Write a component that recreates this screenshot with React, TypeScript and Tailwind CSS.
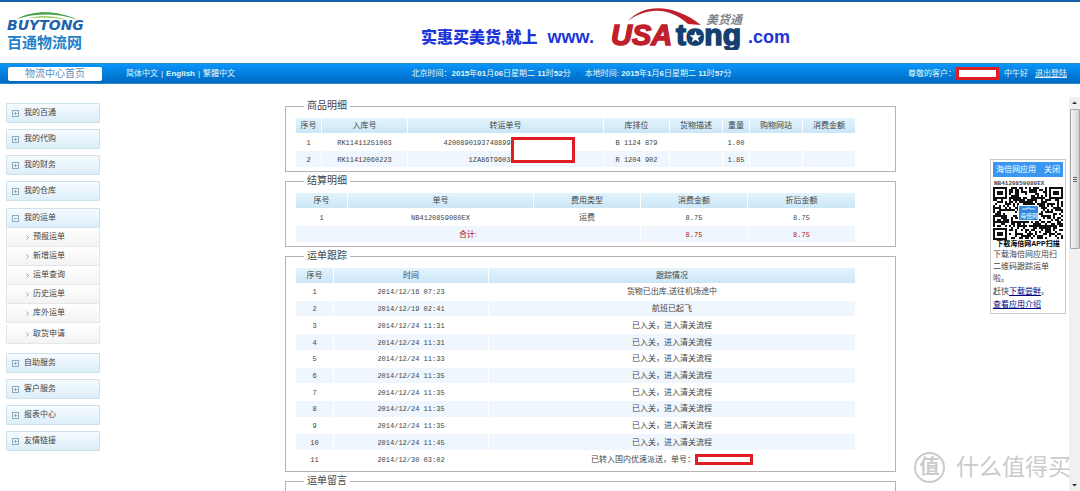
import type { ReactNode } from 'react'
import clsx from 'clsx'

const SUB_ITEMS = ['预报运单', '新增运单', '运单查询', '历史运单', '库外运单']

const MENU_TOP = ['我的百通', '我的代购', '我的财务', '我的仓库']
const MENU_BOTTOM = ['自助服务', '客户服务', '报表中心', '友情链接']

const CLEARED = '已入关，进入清关流程'

const TRACKING = [
  { time: '2014/12/16 07:23', status: '货物已出库,送往机场途中' },
  { time: '2014/12/19 02:41', status: '航班已起飞' },
  { time: '2014/12/24 11:31', status: CLEARED },
  { time: '2014/12/24 11:31', status: CLEARED },
  { time: '2014/12/24 11:33', status: CLEARED },
  { time: '2014/12/24 11:35', status: CLEARED },
  { time: '2014/12/24 11:35', status: CLEARED },
  { time: '2014/12/24 11:35', status: CLEARED },
  { time: '2014/12/24 11:35', status: CLEARED },
  { time: '2014/12/24 11:45', status: CLEARED },
  { time: '2014/12/30 03:02', status: '已转入国内优速派送，单号：', masked: true },
]

function BuytongLogo() {
  return (
    <a href="#" className="block w-[84px]">
      <svg viewBox="0 0 84 22" className="block h-[22px] w-[84px]" aria-hidden="true">
        <path d="M10 8 C26 -1 50 -1 71 9 C50 2 30 2 10 8Z" fill="#43a047" />
        <path d="M22 7 C34 4 50 5 60 9 C48 6 34 6 22 7Z" fill="#8bc34a" />
        <text x="0" y="19" fontFamily="DejaVu Sans" fontWeight="bold" fontStyle="italic" fontSize="14" fill="#1c62ac">
          BUYTONG
        </text>
      </svg>
      <span className="block pt-px text-[15px] leading-[18px] font-bold text-[#2380c8]">百通物流网</span>
    </a>
  )
}

function UsaTongLogo() {
  return (
    <svg viewBox="0 0 146 46" className="h-[46px] w-[146px]" role="img" aria-label="USAtong 美货通">
      <path d="M26 17 C42 -1 72 0 99 21 L86 20 C66 2 44 4 26 17Z" fill="#c0202c" />
      <text x="9" y="41" fontFamily="Liberation Sans" fontWeight="bold" fontStyle="italic" fontSize="29" fill="#c0202c" stroke="#c0202c" strokeWidth="1.500">
        USA
      </text>
      <text x="74" y="41" fontFamily="Liberation Sans" fontWeight="bold" fontSize="30" fill="#153f70" stroke="#153f70" strokeWidth="1.500">
        tong
      </text>
      <circle cx="93.500" cy="33" r="6" fill="#153f70" />
      <path d="M93.500 27 L95 31.300 L99.500 31.300 L96 34 L97.300 38.300 L93.500 35.700 L89.700 38.300 L91 34 L87.500 31.300 L92 31.300Z" fill="#fff" />
      <text x="104" y="20" fontFamily="Noto Sans CJK SC" fontStyle="italic" fontSize="12" fill="#808488">
        美货通
      </text>
    </svg>
  )
}

function Mask({ className }: { className: string }) {
  return <span className={clsx('border-[3px] border-[#e01c24] bg-white', className)} />
}

function MenuButton({ label, open }: { label: string; open?: boolean }) {
  return (
    <button
      type="button"
      aria-expanded={!!open}
      className="flex h-5 w-full items-center gap-[5px] rounded-[1px] border border-[#cfe2ec] bg-linear-to-b from-[#f6fbfe] to-[#dceefa] pl-[5px]"
    >
      <svg viewBox="0 0 7 7" className="size-[7px]" fill="none" stroke="#8fa9b8">
        <rect x=".5" y=".5" width="6" height="6" />
        <path d={open ? 'M2 3.500H5' : 'M2 3.500H5M3.500 2V5'} />
      </svg>
      {label}
    </button>
  )
}

function SubLink({ label }: { label: string }) {
  return (
    <a
      href="#"
      className="flex h-[19px] items-center gap-1 border-x border-b border-[#e4e6e8] bg-linear-to-b from-white to-[#f3f3f3] pl-[19px]"
    >
      <svg viewBox="0 0 3 5" className="h-[5px] w-[3px]" fill="none" stroke="#8fa0a8">
        <path d="M.5 .5L2.500 2.500L.5 4.500" />
      </svg>
      {label}
    </a>
  )
}

function Sidebar() {
  return (
    <nav className="flex w-[94px] shrink-0 flex-col gap-[6px] pt-[6px]">
      {MENU_TOP.map((label) => (
        <MenuButton key={label} label={label} />
      ))}
      <div className="mt-px mb-[3px]">
        <MenuButton label="我的运单" open />
        {SUB_ITEMS.map((label) => (
          <SubLink key={label} label={label} />
        ))}
        <div className="pt-[2px]">
          <SubLink label="取货申请" />
        </div>
      </div>
      {MENU_BOTTOM.map((label) => (
        <MenuButton key={label} label={label} />
      ))}
    </nav>
  )
}

function Section({ title, children }: { title: string; children?: ReactNode }) {
  return (
    <fieldset className="mb-[2px] border border-[#b4b4b4] pb-[3px]">
      <legend className="ml-[18px] px-[3px] text-[10px] leading-[14px]">{title}</legend>
      <div className="pt-[5px] pr-[39px] pl-[10px]">{children}</div>
    </fieldset>
  )
}

function Table({ cols, heads, className, children }: { cols: string[]; heads: string[]; className?: string; children: ReactNode }) {
  return (
    <table className={clsx('w-full table-fixed border-separate border-spacing-0 text-center', className)}>
      <colgroup>
        {cols.map((width, i) => (
          <col key={i} className={width} />
        ))}
      </colgroup>
      <thead>
        <tr className="h-[16px]">
          {heads.map((head) => (
            <th
              key={head}
              className="border-r border-b border-white bg-linear-to-b from-[#e3f4fc] to-[#cbe6f7] bg-clip-padding p-0 leading-[15px] font-normal"
            >
              {head}
            </th>
          ))}
        </tr>
      </thead>
      <tbody>{children}</tbody>
    </table>
  )
}

function Row({ cells, even, className }: { cells: ReactNode[]; even?: boolean; className?: string }) {
  return (
    <tr className={clsx('h-[16px]', className)}>
      {cells.map((cell, i) => (
        <Cell key={i} even={even}>
          {cell}
        </Cell>
      ))}
    </tr>
  )
}

function Cell({ even, colSpan, children }: { even?: boolean; colSpan?: number; children?: ReactNode }) {
  return (
    <td
      colSpan={colSpan}
      className={clsx('border-r border-b border-white bg-clip-padding p-0 leading-[15px]', even && 'bg-[#eff6fd]')}
    >
      {children}
    </td>
  )
}

function Mono({ children }: { children: ReactNode }) {
  return <span className="font-['Liberation_Mono',monospace] text-[7px] leading-[10px]">{children}</span>
}

function Details() {
  return (
    <main className="min-w-0 flex-1 pt-[2px]">
      <Section title="商品明细">
        <Table
          className="h-[50px]"
          cols={['w-[26px]', 'w-[86px]', 'w-[196px]', 'w-[66px]', 'w-[53px]', 'w-[27px]', 'w-[53px]', 'w-[53px]']}
          heads={['序号', '入库号', '转运单号', '库排位', '货物描述', '重量', '购物网站', '消费金额']}
        >
          <Row
            cells={[
              <Mono>1</Mono>,
              <Mono>RK11411251003</Mono>,
              <span className="relative inline-block w-[124px] text-left align-top">
                <Mono>42008901937488994</Mono>
                <Mask className="absolute top-[2px] left-[67px] h-[26px] w-[64px]" />
              </span>,
              <Mono>B 1124 879</Mono>,
              '',
              <Mono>1.00</Mono>,
              '',
              '',
            ]}
          />
          <Row
            even
            cells={[
              <Mono>2</Mono>,
              <Mono>RK11412060223</Mono>,
              <span className="inline-block w-[74px] text-left align-top">
                <Mono>1ZA86T96030</Mono>
              </span>,
              <Mono>R 1204 902</Mono>,
              '',
              <Mono>1.85</Mono>,
              '',
              '',
            ]}
          />
        </Table>
      </Section>

      <Section title="结算明细">
        <Table
          className="h-[50px]"
          cols={['w-[52px]', 'w-[186px]', 'w-[107px]', 'w-[107px]', 'w-[108px]']}
          heads={['序号', '单号', '费用类型', '消费金额', '折后金额']}
        >
          <Row cells={[<Mono>1</Mono>, <Mono>NB4120859080EX</Mono>, '运费', <Mono>8.75</Mono>, <Mono>8.75</Mono>]} />
          <tr className="h-[16px] text-[#b0101c]">
            <Cell even colSpan={3}>合计:</Cell>
            <Cell even><Mono>8.75</Mono></Cell>
            <Cell even><Mono>8.75</Mono></Cell>
          </tr>
        </Table>
      </Section>

      <Section title="运单跟踪">
        <Table className="h-[200px]" cols={['w-[38px]', 'w-[155px]', 'w-[367px]']} heads={['序号', '时间', '跟踪情况']}>
          {TRACKING.map((entry, i) => (
            <Row
              key={i}
              even={i % 2 === 1}
              cells={[
                <Mono>{i + 1}</Mono>,
                <Mono>{entry.time}</Mono>,
                <span className="inline-flex items-center align-top">
                  {entry.status}
                  {entry.masked && <Mask className="h-[11px] w-[58px]" />}
                </span>,
              ]}
            />
          ))}
        </Table>
      </Section>

      <Section title="运单留言">
        <div className="h-10" />
      </Section>
    </main>
  )
}

const QR_COLS = 35
const QR_ROWS = 26

function isDark(x: number, y: number) {
  const n = Math.sin(x * 12.9898 + y * 78.233) * 43758.5453
  return n - Math.floor(n) > 0.47
}

function QrCode() {
  const finders = [[0, 0], [56, 0], [0, 41]]
  const cells: string[] = []
  for (let y = 0; y < QR_ROWS; y++) {
    for (let x = 0; x < QR_COLS; x++) {
      const nearFinder = (y < 6 && (x < 8 || x > 26)) || (y > 19 && x < 8)
      if (!nearFinder && isDark(x, y)) cells.push(`M${x * 2} ${y * 2}h2v2h-2z`)
    }
  }
  return (
    <svg viewBox="0 0 70 53" className="h-[53px] w-[70px]" role="img" aria-label="二维码">
      <path d={cells.join('')} fill="#111" />
      {finders.map(([x, y]) => (
        <g key={`${x}-${y}`}>
          <rect x={x + 1} y={y + 1} width="12" height="10" fill="#fff" stroke="#111" strokeWidth="2" />
          <rect x={x + 4} y={y + 4} width="6" height="4" fill="#111" />
        </g>
      ))}
      <rect x="25" y="18" width="21" height="16" rx="1" fill="#fff" />
      <rect x="26" y="19" width="19" height="14" rx="1" fill="#2f86dc" />
      <path d="M29 22h5v-1h3v1h5" stroke="#d9ecff" fill="none" />
      <text x="27" y="31" fontSize="6" fontFamily="Noto Sans CJK SC" fill="#fff">海倍网</text>
    </svg>
  )
}

function AppPanel() {
  return (
    <aside className="mt-[62px] w-[76px] shrink-0 self-start border border-[#c8c8c8] bg-white p-[2px]">
      <div className="flex h-[15px] items-center justify-between bg-[#3b96f2] px-[3px] text-white">
        <span>海倍网应用</span>
        <button type="button">关闭</button>
      </div>
      <div className="mt-[4px] pl-px font-['Liberation_Mono',monospace] text-[6px] leading-[6px] font-bold">NB4120859080EX</div>
      <QrCode />
      <div className="text-center text-[7px] leading-[7px] font-bold whitespace-nowrap text-black">下载海倍网APP扫描</div>
      <p className="mt-[2px] leading-[12px]">下载海倍网应用扫二维码跟踪运单啦。</p>
      <p className="leading-[13px]">
        赶快<a href="#" className="text-[#000080] underline">下载尝鲜</a>。
      </p>
      <p className="leading-[13px]">
        <a href="#" className="text-[#000080] underline">查看应用介绍</a>
      </p>
    </aside>
  )
}

function ScrollRail() {
  return (
    <div className="flex w-[11px] shrink-0 flex-col items-center bg-[#f0f0f0]" aria-hidden="true">
      <svg viewBox="0 0 11 12" className="h-3 w-[11px]">
        <path d="M3 7L5.500 4.500L8 7Z" fill="#333" />
      </svg>
      <div className="flex h-[140px] w-[10px] flex-col items-center justify-center gap-px rounded-[1px] border border-[#a5a5a5] bg-linear-to-r from-[#f5f5f5] to-[#d2d2d2]">
        <i className="h-px w-1 bg-[#666]" />
        <i className="h-px w-1 bg-[#666]" />
        <i className="h-px w-1 bg-[#666]" />
      </div>
      <svg viewBox="0 0 11 12" className="mt-auto h-3 w-[11px]">
        <path d="M3 5L5.500 7.500L8 5Z" fill="#333" />
      </svg>
    </div>
  )
}

function Watermark() {
  return (
    <div className="absolute right-[9px] bottom-2 flex items-center gap-[11px] text-[#cbcbcb]">
      <span className="flex size-[31px] items-center justify-center rounded-full border-2 border-[#cbcbcb] text-[20px] leading-none font-bold">值</span>
      <span className="text-[23px] leading-8">什么值得买</span>
    </div>
  )
}

export default function App() {
  return (
    <div className="relative flex h-screen flex-col overflow-hidden bg-white font-['Liberation_Sans','Noto_Sans_CJK_SC',sans-serif] text-[8px] text-[#444]">
      <header className="flex h-[63px] shrink-0 border-t-2 border-[#1460a8] pl-[7px]">
        <div className="pt-[9px]">
          <BuytongLogo />
        </div>
        <div className="flex flex-1 justify-center pl-[40px]">
          <div className="flex items-center text-[18px] font-bold text-[#1c35d8]">
            <span className="pt-[10px] text-[16px] font-black">实惠买美货,就上</span>
            <span className="pt-[10px] pl-[10px]">www.</span>
            <span className="pb-3 pl-2">
              <UsaTongLogo />
            </span>
            <span className="pt-[10px]">.com</span>
          </div>
        </div>
      </header>

      <div className="flex h-[21px] shrink-0 items-center border-y border-[#2a86c4] bg-linear-to-b from-[#0a96fb] to-[#0068c0] pr-[13px] pl-2 text-[#e2f6f2]">
        <a href="#" className="flex h-[14px] w-[94px] items-center justify-center rounded-[2px] bg-white text-[10px] text-[#5d8fba]">
          物流中心首页
        </a>
        <div className="flex gap-[3px] pl-6">
          <a href="#">简体中文</a>|<a href="#" className="font-bold">English</a>|<a href="#">繁體中文</a>
        </div>
        <div className="flex flex-1 justify-center gap-[6px]">
          <span>北京时间：<b>2015</b>年<b>01</b>月<b>06</b>日星期二 <b>11</b>时<b>52</b>分</span>
          <span className="text-[#0a5ca8]">|</span>
          <span>本地时间: <b>2015</b>年<b>1</b>月<b>6</b>日星期二 <b>11</b>时<b>57</b>分</span>
        </div>
        <div className="flex items-center">
          尊敬的客户：
          <Mask className="h-[13px] w-[43px]" />
          <span className="pl-[5px]">中午好</span>
          <a href="#" className="pl-[7px] underline">退出登陆</a>
        </div>
      </div>

      <div className="mt-[13px] flex min-h-0 flex-1 pl-[6px]">
        <Sidebar />
        <div className="w-[185px] shrink-0" />
        <Details />
        <div className="w-[94px] shrink-0" />
        <AppPanel />
        <div className="w-[3px] shrink-0" />
        <ScrollRail />
      </div>
      <Watermark />
    </div>
  )
}
